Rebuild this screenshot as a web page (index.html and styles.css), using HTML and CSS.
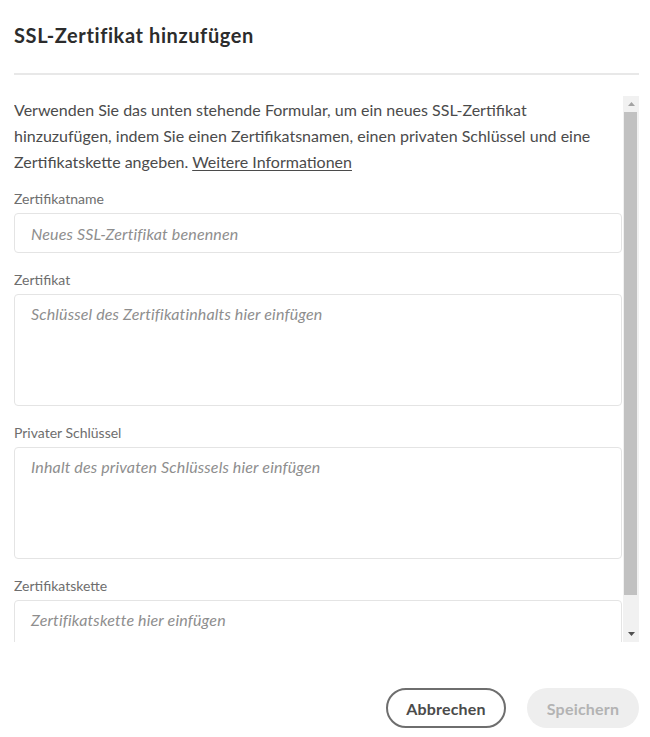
FILE: index.html
```html
<!DOCTYPE html>
<html lang="de">
<head>
<meta charset="utf-8">
<title>SSL-Zertifikat hinzufügen</title>
<link rel="stylesheet" href="styles.css">
</head>
<body>
<div class="dialog">
  <h1 class="title">SSL-Zertifikat hinzufügen</h1>
  <div class="divider"></div>
  <div class="body">
    <div class="content">
      <p class="intro">Verwenden Sie das unten stehende Formular, um ein neues SSL-Zertifikat<br>hinzuzufügen, indem Sie einen Zertifikatsnamen, einen privaten Schlüssel und eine<br>Zertifikatskette angeben. <a href="#" class="link">Weitere Informationen</a></p>
      <label class="label">Zertifikatname</label>
      <input class="field" type="text" placeholder="Neues SSL-Zertifikat benennen">
      <label class="label">Zertifikat</label>
      <textarea class="field area" placeholder="Schlüssel des Zertifikatinhalts hier einfügen"></textarea>
      <label class="label">Privater Schlüssel</label>
      <textarea class="field area" placeholder="Inhalt des privaten Schlüssels hier einfügen"></textarea>
      <label class="label">Zertifikatskette</label>
      <textarea class="field area" placeholder="Zertifikatskette hier einfügen"></textarea>
    </div>
    <div class="scrollbar" aria-hidden="true">
      <div class="sb-btn">
        <svg width="7" height="4" viewBox="0 0 7 4"><path d="M0 4 L3.5 0 L7 4 Z" fill="#a3a3a3"/></svg>
      </div>
      <div class="sb-track"><div class="sb-thumb"></div></div>
      <div class="sb-btn">
        <svg width="7" height="4" viewBox="0 0 7 4"><path d="M0 0 L7 0 L3.5 4 Z" fill="#505050"/></svg>
      </div>
    </div>
  </div>
  <div class="footer">
    <button class="btn secondary" type="button">Abbrechen</button>
    <button class="btn disabled" type="button" disabled>Speichern</button>
  </div>
</div>
</body>
</html>
```

FILE: styles.css
```css
* { box-sizing: border-box; }
html, body { margin: 0; padding: 0; background: #ffffff; }
body { font-family: "Lato", "Noto Sans", sans-serif; color: #4b4b4b; }

.dialog {
  width: 650px;
  padding: 0 11px 0 14px;
}

.title {
  margin: 0;
  padding-top: 23px;
  font-size: 20px;
  line-height: 24px;
  font-weight: 700;
  letter-spacing: 0.6px;
  color: #2c2c2c;
}

.divider {
  margin-top: 26px;
  height: 2px;
  background: #e8e8e8;
}

.body {
  margin-top: 21px;
  height: 546px;
  display: flex;
  flex-direction: row;
}

.content {
  width: 609px;
  flex: none;
  overflow: hidden;
  padding-top: 1px;
}

.intro {
  margin: 0;
  font-size: 16px;
  line-height: 26px;
  color: #4b4b4b;
  white-space: nowrap;
}

.link { color: #4b4b4b; text-decoration: underline; text-underline-offset: 2px; }

.label {
  display: block;
  margin-top: 18px;
  font-size: 14px;
  line-height: 18px;
  color: #6e6e6e;
  padding-bottom: 5px;
}
.intro + .label { margin-top: 15px; }

.field {
  display: block;
  width: 608px;
  height: 40px;
  border: 1px solid #e4e4e4;
  border-radius: 4px;
  background: #fff;
  padding: 0 16px;
  font-family: "Lato", "Noto Sans", sans-serif;
  font-size: 16px;
  letter-spacing: 0.15px;
  color: #4b4b4b;
  outline: none;
  flex: none;
}
.area {
  height: 112px;
  padding: 8px 16px;
  resize: none;
  line-height: 22px;
}

.field::placeholder {
  color: #8e8e8e;
  font-style: italic;
}

.scrollbar {
  width: 16px;
  flex: none;
  background: #f1f1f1;
  display: flex;
  flex-direction: column;
}
.sb-btn {
  height: 16px;
  display: flex;
  align-items: center;
  justify-content: center;
  flex: none;
}
.sb-track {
  flex: 1;
  padding: 0 2px 0 1px;
}
.sb-thumb {
  height: 483px;
  background: #c1c1c1;
}

.footer {
  display: flex;
  justify-content: flex-end;
  gap: 21px;
  margin-top: 46px;
}

.btn {
  height: 40px;
  border-radius: 20px;
  font-family: "Lato", "Noto Sans", sans-serif;
  font-size: 16px;
  font-weight: 700;
  letter-spacing: 0.2px;
  padding: 0;
}
.secondary {
  border: 2px solid #6e6e6e;
  background: #fff;
  color: #4b4b4b;
  width: 120px;
}
.disabled {
  border: none;
  background: #eeeeee;
  color: #b3b3b3;
  width: 112px;
}
```
